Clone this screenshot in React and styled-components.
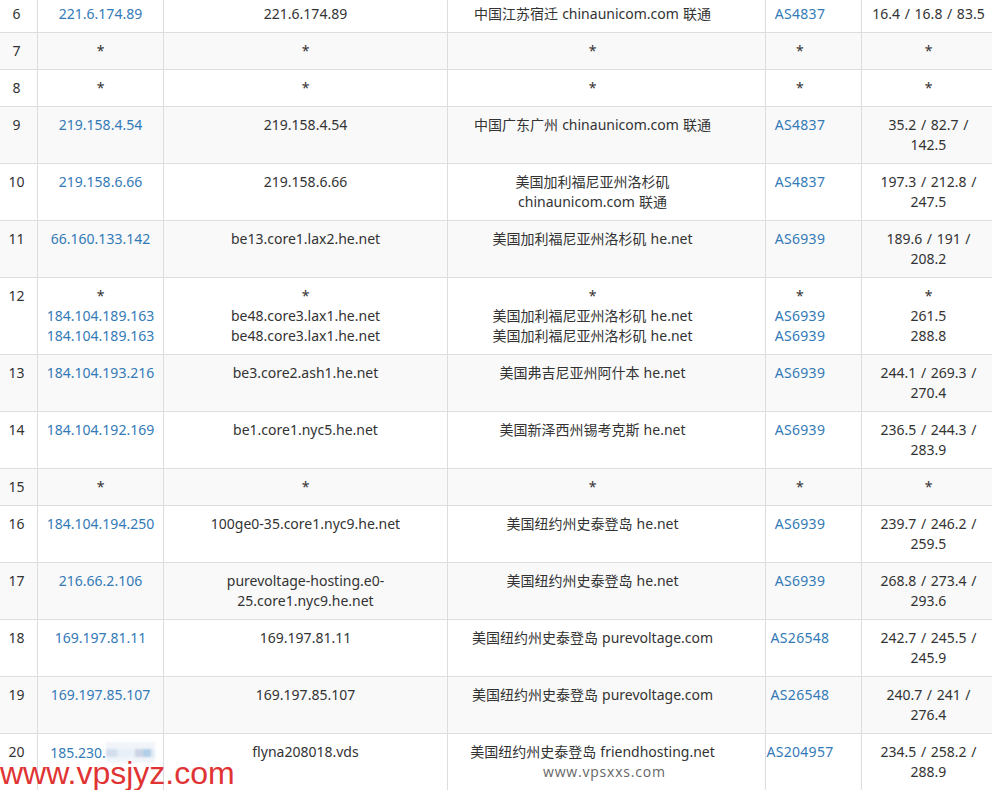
import React from "react";
import styled, { createGlobalStyle } from "styled-components";

const Global = createGlobalStyle`
  html, body { margin: 0; padding: 0; background: #fff; }
  body { overflow: hidden; height: 790px; }
`;
const Page = styled.div`
  position: relative;
  width: 992px;
  height: 790px;
  overflow: hidden;
  font-family: "Noto Sans", "Noto Sans CJK SC", sans-serif;
  font-size: 14px;
  line-height: 20px;
  color: #333;
`;
const Table = styled.table`
  width: 1000px;
  margin: -5px 0 0 -5px;
  table-layout: fixed;
  border-collapse: collapse;
  border-spacing: 0;
`;
const Col = styled.col`
  width: ${(p) => p.$w}px;
`;
const Row = styled.tr`
  background: ${(p) => (p.$striped ? "#f9f9f9" : "#fff")};
`;
const Cell = styled.td`
  padding: 8px;
  border: 1px solid #ddd;
  text-align: center;
  vertical-align: top;
`;
const LocationCell = styled(Cell)`
  padding-right: 36px;
  word-spacing: 0.5px;
`;
const AsnCell = styled(Cell)`
  padding: 8px 27px 8px 0;
  letter-spacing: 0.3px;
`;
const LatencyCell = styled(Cell)`
  word-spacing: 1px;
`;
const Line = styled.div`
  display: block;
`;
const IpLink = styled.a`
  color: #337ab7;
  text-decoration: none;
`;
const Redacted = styled.span`
  display: inline-block;
  width: 49px;
  height: 21px;
  margin-right: -4px;
  vertical-align: -5px;
  background-color: #f1f5fa;
  background-image: linear-gradient(90deg, #d3deed 0 22%, #e6eef7 22% 44%, #e9f0f8 44% 60%, #ccd3e6 60% 76%, #b1cfe7 76% 92%, #e2ebf5 92%);
  background-size: 100% 8px;
  background-position: 0 7px;
  background-repeat: no-repeat;
  filter: blur(0.8px);
`;
const RedMark = styled.div`
  position: absolute;
  left: 0;
  top: 755px;
  font-family: "Liberation Sans", Arial, sans-serif;
  font-size: 32px;
  line-height: 36px;
  color: #e03434;
  white-space: nowrap;
`;
const GreyMark = styled.div`
  position: absolute;
  left: 543px;
  top: 762px;
  font-family: "Open Sans", sans-serif;
  font-size: 14px;
  letter-spacing: 0.8px;
  line-height: 20px;
  color: #666;
  white-space: nowrap;
`;

const rows = [
  ["6", ["221.6.174.89"], ["221.6.174.89"], ["中国江苏宿迁 chinaunicom.com 联通"], ["AS4837"], ["16.4 / 16.8 / 83.5"]],
  ["7", ["*"], ["*"], ["*"], ["*"], ["*"]],
  ["8", ["*"], ["*"], ["*"], ["*"], ["*"]],
  ["9", ["219.158.4.54"], ["219.158.4.54"], ["中国广东广州 chinaunicom.com 联通"], ["AS4837"], ["35.2 / 82.7 / 142.5"]],
  ["10", ["219.158.6.66"], ["219.158.6.66"], ["美国加利福尼亚州洛杉矶 chinaunicom.com 联通"], ["AS4837"], ["197.3 / 212.8 / 247.5"]],
  ["11", ["66.160.133.142"], ["be13.core1.lax2.he.net"], ["美国加利福尼亚州洛杉矶 he.net"], ["AS6939"], ["189.6 / 191 / 208.2"]],
  ["12", ["*", "184.104.189.163", "184.104.189.163"], ["*", "be48.core3.lax1.he.net", "be48.core3.lax1.he.net"], ["*", "美国加利福尼亚州洛杉矶 he.net", "美国加利福尼亚州洛杉矶 he.net"], ["*", "AS6939", "AS6939"], ["*", "261.5", "288.8"]],
  ["13", ["184.104.193.216"], ["be3.core2.ash1.he.net"], ["美国弗吉尼亚州阿什本 he.net"], ["AS6939"], ["244.1 / 269.3 / 270.4"]],
  ["14", ["184.104.192.169"], ["be1.core1.nyc5.he.net"], ["美国新泽西州锡考克斯 he.net"], ["AS6939"], ["236.5 / 244.3 / 283.9"]],
  ["15", ["*"], ["*"], ["*"], ["*"], ["*"]],
  ["16", ["184.104.194.250"], ["100ge0-35.core1.nyc9.he.net"], ["美国纽约州史泰登岛 he.net"], ["AS6939"], ["239.7 / 246.2 / 259.5"]],
  ["17", ["216.66.2.106"], ["purevoltage-hosting.e0-25.core1.nyc9.he.net"], ["美国纽约州史泰登岛 he.net"], ["AS6939"], ["268.8 / 273.4 / 293.6"]],
  ["18", ["169.197.81.11"], ["169.197.81.11"], ["美国纽约州史泰登岛 purevoltage.com"], ["AS26548"], ["242.7 / 245.5 / 245.9"]],
  ["19", ["169.197.85.107"], ["169.197.85.107"], ["美国纽约州史泰登岛 purevoltage.com"], ["AS26548"], ["240.7 / 241 / 276.4"]],
  ["20", ["185.230."], ["flyna208018.vds"], ["美国纽约州史泰登岛 friendhosting.net"], ["AS204957"], ["234.5 / 258.2 / 288.9"]],
];

const Lines = ({ items, link, redact }) =>
  items.map((t, i) => (
    <Line key={i}>
      {link && t !== "*" ? <IpLink href="#">{t}{redact && <Redacted />}</IpLink> : t}
    </Line>
  ));

export default function App() {
  return (
    <Page>
      <Global />
      <Table>
        <colgroup>
          <Col $w={42} />
          <Col $w={126} />
          <Col $w={284} />
          <Col $w={318} />
          <Col $w={96} />
          <Col $w={134} />
        </colgroup>
        <tbody>
          {rows.map((r, i) => (
            <Row key={r[0]} $striped={i % 2 === 1}>
              <Cell>{r[0]}</Cell>
              <Cell><Lines items={r[1]} link redact={r[0] === "20"} /></Cell>
              <Cell><Lines items={r[2]} /></Cell>
              <LocationCell><Lines items={r[3]} /></LocationCell>
              <AsnCell><Lines items={r[4]} link /></AsnCell>
              <LatencyCell><Lines items={r[5]} /></LatencyCell>
            </Row>
          ))}
        </tbody>
      </Table>
      <RedMark>www.vpsjyz.com</RedMark>
      <GreyMark>www.vpsxxs.com</GreyMark>
    </Page>
  );
}
